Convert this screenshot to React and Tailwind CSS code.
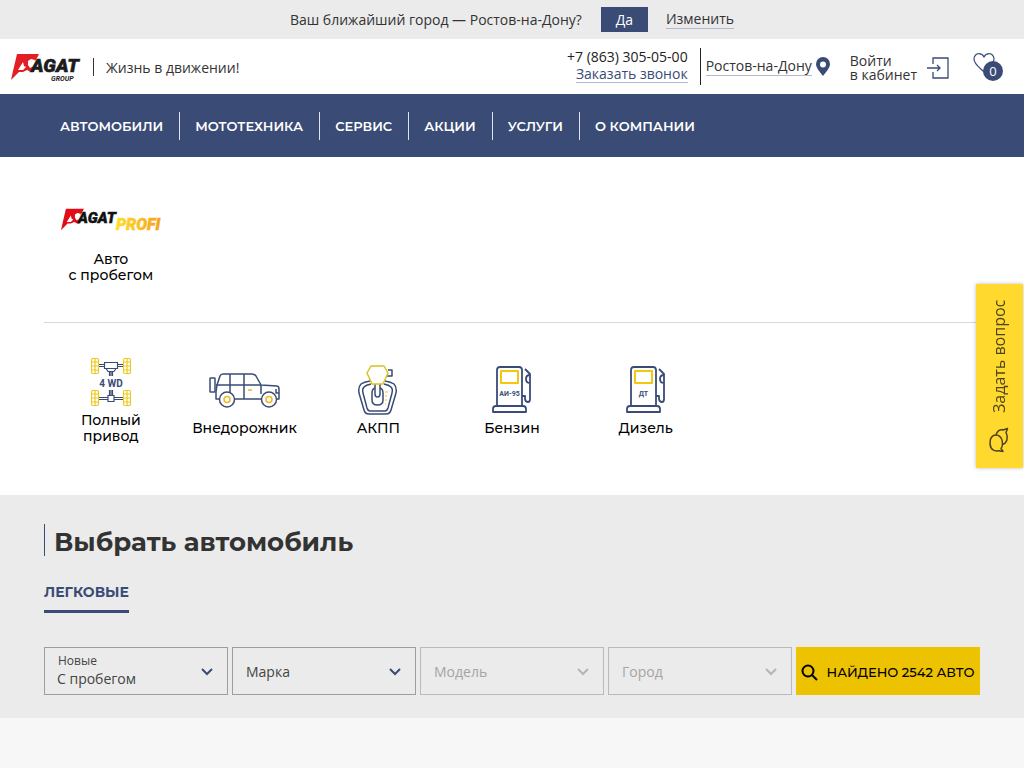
import React from "react";

const navItems = ["АВТОМОБИЛИ", "МОТОТЕХНИКА", "СЕРВИС", "АКЦИИ", "УСЛУГИ", "О КОМПАНИИ"];

function AgatEmblem({ color }) {
  return (
    <g>
      <path fill={color} d="M6 1h22l-3 6-3 2 1 10h-3l-4-2-4 2H8l-8 8 2-9z" />
      <path fill="#fff" d="M12 9l-5 8h5l3-3-2-1zM17 8l3-2 4 1-1 2 2 3-1 3-3-1-2 1-2-3z" />
    </g>
  );
}

function AgatGroupLogo() {
  return (
    <svg width="70" height="30" viewBox="0 0 70 30" role="img" aria-label="Agat Group">
      <AgatEmblem color="#e31e24" />
      <text x="20" y="19" fill="#1c1c1c" stroke="#1c1c1c" strokeWidth="0.6" fontSize="19" className="font-['Roboto',sans-serif] font-black italic">AGAT</text>
      <text x="40" y="28" fill="#1c1c1c" fontSize="7" className="font-['Roboto',sans-serif] font-bold italic">GROUP</text>
    </svg>
  );
}

function AgatProfiLogo() {
  return (
    <svg width="102" height="28" viewBox="0 0 102 28" role="img" aria-label="Agat Profi">
      <defs>
        <linearGradient id="profi" x1="0" y1="0" x2="1" y2="0">
          <stop offset="0" stopColor="#ffdf2b" />
          <stop offset="1" stopColor="#f5a21c" />
        </linearGradient>
      </defs>
      <g transform="translate(1 3) scale(0.82)"><AgatEmblem color="#e00d18" /></g>
      <text x="18" y="18" fill="#111" stroke="#111" strokeWidth="0.5" fontSize="15" className="font-['Roboto',sans-serif] font-black italic">AGAT</text>
      <text x="56" y="25" fill="url(#profi)" stroke="url(#profi)" strokeWidth="0.5" fontSize="16" className="font-['Roboto',sans-serif] font-black italic">PROFI</text>
    </svg>
  );
}

function Wheel({ x, y }) {
  return (
    <g transform={`translate(${x} ${y})`} stroke="#ecc91e" fill="none" strokeWidth="1.200">
      <rect x="0.500" y="0.500" width="7" height="15" rx="1.500" />
      <path d="M4 1v14M1 4h6M1 8h6M1 12h6" />
    </g>
  );
}

function FourWheelIcon() {
  return (
    <svg width="40" height="50" viewBox="0 0 40 50" aria-hidden="true">
      <Wheel x="0" y="1" />
      <Wheel x="32" y="1" />
      <Wheel x="0" y="33" />
      <Wheel x="32" y="33" />
      <g stroke="#3a4c76" fill="none" strokeWidth="1.200">
        <path d="M8 7.500h6M8 9.500h6M26 7.500h6M26 9.500h6M13.500 5.500h13v6h-13zM15 11.500l2 3h6l2-3M18.500 15v4M20 15v4M21.500 15v4M18.500 33v5M20 33v5M21.500 33v5M8 40.500h9M8 42.500h9M23 40.500h9M23 42.500h9M17 38.500h6v6h-6z" />
      </g>
      <text x="20" y="30" textAnchor="middle" fill="#3a4c76" fontSize="10" className="font-['Roboto',sans-serif] font-bold">4 WD</text>
    </svg>
  );
}

function SuvIcon() {
  return (
    <svg width="72" height="35" viewBox="0 0 72 35" aria-hidden="true" fill="none" stroke="#3a4c76" strokeWidth="1.500" strokeLinejoin="round">
      <path d="M11 26H7v-7l1-7 3-9q.7-2 3-2h29q2.500 0 4 2l5 9 16 1q2 .5 2 3v10h-3M25 26h28" />
      <path d="M7 12h45M21 1v19M35 1v25M52 12v9M67 16v4h3" />
      <rect x="1" y="5" width="5" height="14" rx="0.500" />
      <circle cx="18" cy="26.500" r="7.500" />
      <circle cx="60" cy="26.500" r="7.500" />
      <g stroke="#ecb91e"><circle cx="18" cy="26.500" r="3" /><circle cx="60" cy="26.500" r="3" /><path d="M39 17h4" /></g>
    </svg>
  );
}

function GearboxIcon() {
  return (
    <svg width="40" height="50" viewBox="0 0 40 50" aria-hidden="true" fill="none" stroke="#3a4c76" strokeWidth="1.500" strokeLinejoin="round">
      <path d="M12 16q-6 1-9 3-3 3-2 9l5 17q1 4 5 4h17q4 0 5-4l5-17q1-6-2-9-3-2-9-3" />
      <path d="M13 19q-5 1-7 3-2 2-1 6l4 15q1 3 3 3h15q2 0 3-3l4-15q1-4-1-6-2-2-7-3" />
      <path d="M17 23q-3 1-3 5v7q0 5 5.500 5t5.500-5v-7q0-4-3-5" />
      <path d="M17 19v10q0 3 2.500 3t2.500-3V19" />
      <path d="M30 5h4v6h-5" />
      <path d="M13 1h13l4 7-5 11H14L9 8z" stroke="#dcc21c" fill="#fff" />
      <path d="M27 27h3M27 31h2M27 35h2M27 39h1" stroke="#ecc91e" strokeWidth="1" />
    </svg>
  );
}

function PumpIcon({ fuel }) {
  return (
    <svg width="40" height="48" viewBox="0 0 40 48" aria-hidden="true" fill="none" stroke="#3a4c76" strokeWidth="1.800" strokeLinejoin="round">
      <path d="M5 40V4q0-3 3-3h19q3 0 3 3v36" />
      <path d="M4 40h27q3 0 3 3v3H1v-3q0-3 3-3z" />
      <path d="M30 30h3v3q.5 3 3 3 2 0 2-3V8l-5-5M38 9q-4 0-4 4t4 4" />
      <rect x="9" y="5" width="17" height="12" stroke="#f0c814" strokeWidth="2" />
      <text x="17.500" y="30" textAnchor="middle" stroke="none" fill="#3a4c76" fontSize="7" className="font-['Roboto',sans-serif] font-bold">{fuel}</text>
    </svg>
  );
}

const categories = [
  { icon: <FourWheelIcon />, lines: ["Полный", "привод"] },
  { icon: <SuvIcon />, lines: ["Внедорожник"] },
  { icon: <GearboxIcon />, lines: ["АКПП"] },
  { icon: <PumpIcon fuel="АИ-95" />, lines: ["Бензин"] },
  { icon: <PumpIcon fuel="ДТ" />, lines: ["Дизель"] },
];

function Category({ icon, lines }) {
  return (
    <a href="#" className="flex flex-col items-center gap-[5px] text-center font-['Montserrat','Inter',sans-serif] text-sm leading-4 font-medium text-black">
      <span className="flex h-[50px] items-center">{icon}</span>
      <span>
        {lines.map((line) => <span key={line} className="block">{line}</span>)}
      </span>
    </a>
  );
}

function Chevron({ className }) {
  return (
    <svg className={className} width="12" height="8" viewBox="0 0 12 8" aria-hidden="true" fill="none" stroke="currentColor" strokeWidth="2">
      <path d="M1 1l5 5 5-5" />
    </svg>
  );
}

function FilterSelect({ name, disabled }) {
  return (
    <div className={disabled ? "relative h-12 border border-[#bababa] text-[#a5a5a5]" : "relative h-12 border border-[#9d9d9d] text-[#444]"}>
      <select aria-label={name} disabled={disabled} className="size-full appearance-none bg-transparent px-[13px] pt-0.5 text-sm opacity-100">
        <option>{name}</option>
      </select>
      <Chevron className={disabled ? "pointer-events-none absolute top-5 right-3.5 text-[#b5b5b5]" : "pointer-events-none absolute top-5 right-3.5 text-[#3a4c76]"} />
    </div>
  );
}

export default function App() {
  return (
    <div className="min-h-screen bg-[#f7f7f7] font-['Open_Sans',sans-serif] text-sm text-[#333]">
      <div className="flex h-[39px] items-center justify-center bg-[#ebebeb]">
        <span>Ваш ближайший город — Ростов-на-Дону?</span>
        <button className="mr-[18px] ml-[19px] h-[25px] w-[47px] bg-[#3a4c76] text-white">Да</button>
        <a href="#" className="border-b border-[#b4b9cc] leading-[18px]">Изменить</a>
      </div>

      <header className="flex h-[55px] items-center bg-white pr-[21px] pl-[11px]">
        <a href="#" className="pt-0.5"><AgatGroupLogo /></a>
        <span className="ml-3 h-[18px] border-l border-[#333]" />
        <span className="ml-3 pt-0.5">Жизнь в движении!</span>
        <div className="ml-auto flex h-[37px] flex-col items-end border-r border-[#222] pr-3">
          <a href="tel:+78633050500" className="leading-[18px] font-medium text-[#222]">+7 (863) 305-05-00</a>
          <a href="#" className="border-b border-[#b4b9cc] leading-4 text-[#3a4c76]">Заказать звонок</a>
        </div>
        <a href="#" className="ml-[5px] border-b border-[#b4b9cc] leading-[18px]">Ростов-на-Дону</a>
        <svg className="ml-1 shrink-0" width="14" height="19" viewBox="0 0 14 19" aria-hidden="true">
          <path fill="#3a4c76" fillRule="evenodd" d="M7 0a7 7 0 0 0-7 7c0 4 4 8 7 12 3-4 7-8 7-12a7 7 0 0 0-7-7zm0 4.500a3 3 0 1 1 0 6 3 3 0 0 1 0-6z" />
        </svg>
        <a href="#" className="ml-5 flex items-center gap-2.5 pt-0.5 leading-[14px]">
          <span>Войти<br />в кабинет</span>
          <svg width="22" height="22" viewBox="0 0 22 22" aria-hidden="true" fill="none" stroke="#3a4c76" strokeWidth="1.300">
            <path d="M6 7V1h15v20H6v-6M0 11h13M10 8l3 3-3 3" />
          </svg>
        </a>
        <a href="#" aria-label="Избранное" className="relative ml-6 block h-[29px] w-[30px] shrink-0 pt-px">
          <svg width="22" height="20" viewBox="0 0 22 20" aria-hidden="true" fill="none" stroke="#3a4c76" strokeWidth="1.200">
            <path d="M11 4C9.500 1 7.500.7 6 .7 3 .7 1 3 1 6c0 5 5 8 10 13 5-5 10-8 10-13 0-3-2-5.300-5-5.300-1.500 0-3.500.3-5 3.300z" />
          </svg>
          <span className="absolute right-0 bottom-0 flex size-5 items-center justify-center rounded-full bg-[#3a4c76] text-[13px] text-white">0</span>
        </a>
      </header>

      <nav className="flex h-[63px] items-center bg-[#3a4c76] px-[45px]">
        <ul className="flex divide-x divide-[#dfe3ec] font-['Montserrat','Inter',sans-serif] text-[13px] leading-7 font-semibold text-white">
          {navItems.map((item) => <li key={item} className="pr-4 pl-[15px]"><a href="#">{item}</a></li>)}
        </ul>
      </nav>

      <main>
        <section className="bg-white px-11 pt-12 pb-[51px]">
          <div className="grid grid-cols-7 border-b border-[#d8d8d8] pb-[39px]">
            <a href="#" className="flex flex-col items-center gap-[18px] text-center font-['Montserrat','Inter',sans-serif] text-sm leading-4 font-medium text-black">
              <AgatProfiLogo />
              <span>Авто<br />с пробегом</span>
            </a>
          </div>
          <div className="mt-[34px] grid grid-cols-7 items-center">
            {categories.map((c) => <Category key={c.lines[0]} {...c} />)}
          </div>
        </section>

        <section className="bg-[#ebebeb] px-11 pt-[29px] pb-[23px]">
          <h1 className="border-l border-[#3a4c76] pt-1 pl-[9px] font-['Montserrat','Inter',sans-serif] text-[26px] leading-7 font-bold">Выбрать автомобиль</h1>
          <button className="mt-[26px] block border-b-3 border-[#3a4c76] pb-2 font-['Montserrat','Inter',sans-serif] text-sm font-bold text-[#3a4c76]">ЛЕГКОВЫЕ</button>
          <form className="mt-[34px] grid grid-cols-5 gap-1">
            <div className="relative flex h-12 flex-col border border-[#9d9d9d] pt-1 text-[#444]">
              <label htmlFor="condition" className="px-[13px] text-xs leading-[18px]">Новые</label>
              <select id="condition" className="w-full appearance-none bg-transparent px-3 text-sm leading-[18px]">
                <option>С пробегом</option>
              </select>
              <Chevron className="pointer-events-none absolute top-5 right-3.5 text-[#3a4c76]" />
            </div>
            <FilterSelect name="Марка" />
            <FilterSelect name="Модель" disabled />
            <FilterSelect name="Город" disabled />
            <button type="button" className="flex h-12 items-center justify-center gap-2 bg-[#edc200] pt-0.5 font-['Montserrat','Inter',sans-serif] text-[13px] font-medium whitespace-nowrap text-black">
              <svg width="17" height="17" viewBox="0 0 17 17" aria-hidden="true" fill="none" stroke="currentColor" strokeWidth="2">
                <circle cx="7" cy="7" r="5.500" /><path d="M11 11l5 5" />
              </svg>
              НАЙДЕНО 2542 АВТО
            </button>
          </form>
        </section>
      </main>

      <button className="fixed top-[284px] right-px flex h-[184px] w-[47px] rotate-180 items-center justify-end gap-3.5 bg-[#ffd92e] pb-4 text-base text-[#4d4320] shadow-[0_0_4px_rgba(0,0,0,0.25)] [writing-mode:vertical-rl]">
        <svg className="rotate-180" width="20" height="26" viewBox="0 0 20 26" aria-hidden="true" fill="none" stroke="currentColor" strokeWidth="1.500" strokeLinejoin="round">
          <path d="M14 24.500l-4-.8C5 25 1 22 1 16.500S3 8 7 8s6.500 4 6.500 8.500c0 2-.5 4-1.500 5z" />
          <path d="M7 8c1-4 4-6 7-5l4.500-1.500-1.500 4c2.500 5 1 11-3.500 12" />
        </svg>
        <span>Задать вопрос</span>
      </button>
    </div>
  );
}
